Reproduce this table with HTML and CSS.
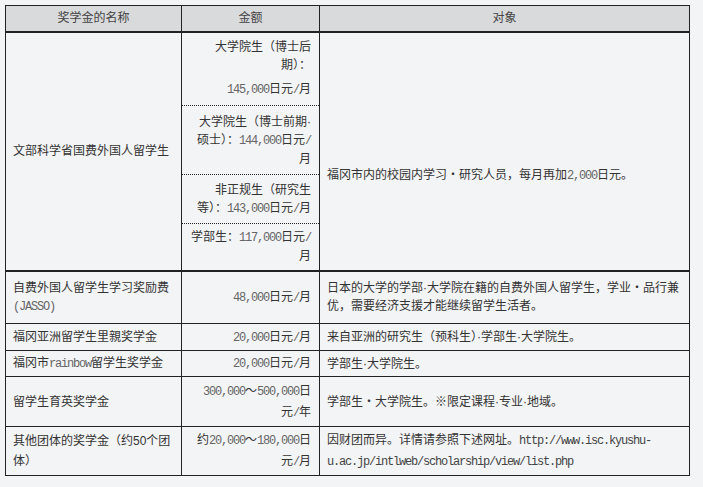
FILE: index.html
```html
<!DOCTYPE html>
<html lang="zh-CN">
<head>
<meta charset="utf-8">
<title>奖学金</title>
<link rel="stylesheet" href="styles.css">
</head>
<body>
<table class="sch">
  <colgroup><col class="c1"><col class="c2"><col class="c3"></colgroup>
  <thead>
    <tr class="hd"><th>奖学金的名称</th><th>金额</th><th>对象</th></tr>
  </thead>
  <tbody>
    <tr class="s1">
      <td rowspan="4" class="name big">文部科学省国费外国人留学生</td>
      <td class="amt dot-b">大学院生（博士后<br>期）：<div class="gap"><span class="num">145,000</span>日元<span class="num">/</span>月</div></td>
      <td rowspan="4" class="obj big top">福冈市内的校园内学习・研究人员，每月再加<span class="num">2,000</span>日元。</td>
    </tr>
    <tr class="s2">
      <td class="amt dot-t dot-b">大学院生（博士前期·<br>硕士）：<span class="num">144,000</span>日元<span class="num">/</span><br>月</td>
    </tr>
    <tr class="s3">
      <td class="amt dot-t dot-b">非正规生（研究生<br>等）：<span class="num">143,000</span>日元<span class="num">/</span>月</td>
    </tr>
    <tr class="s4">
      <td class="amt dot-t big">学部生：<span class="num">117,000</span>日元<span class="num">/</span><br>月</td>
    </tr>
    <tr class="r2">
      <td class="name">自费外国人留学生学习奖励费<br><span class="num">(JASSO)</span></td>
      <td class="amt"><span class="num">48,000</span>日元<span class="num">/</span>月</td>
      <td class="obj nw">日本的大学的学部·大学院在籍的自费外国人留学生，学业・品行兼<br>优，需要经济支援才能继续留学生活者。</td>
    </tr>
    <tr class="r3">
      <td class="name">福冈亚洲留学生里親奖学金</td>
      <td class="amt"><span class="num">20,000</span>日元<span class="num">/</span>月</td>
      <td class="obj">来自亚洲的研究生（预科生）·学部生·大学院生。</td>
    </tr>
    <tr class="r4">
      <td class="name">福冈市<span class="num">rainbow</span>留学生奖学金</td>
      <td class="amt"><span class="num">20,000</span>日元<span class="num">/</span>月</td>
      <td class="obj">学部生·大学院生。</td>
    </tr>
    <tr class="r5">
      <td class="name">留学生育英奖学金</td>
      <td class="amt"><span class="num">300,000</span>～<span class="num">500,000</span>日<br>元<span class="num">/</span>年</td>
      <td class="obj">学部生・大学院生。※限定课程·专业·地域。</td>
    </tr>
    <tr class="r6">
      <td class="name">其他团体的奖学金（约50个团<br>体）</td>
      <td class="amt">约<span class="num">20,000</span>～<span class="num">180,000</span>日<br>元<span class="num">/</span>月</td>
      <td class="obj nw">因财团而异。详情请参照下述网址。<span class="url">http://www.isc.kyushu-</span><br><span class="url">u.ac.jp/intlweb/scholarship/view/list.php</span></td>
    </tr>
  </tbody>
</table>
</body>
</html>
```

FILE: styles.css
```css
html, body {
  margin: 0;
  padding: 0;
  background: #f3f4f6;
}

body {
  font-family: "Liberation Sans", "Noto Sans CJK SC", sans-serif;
  font-size: 12px;
  color: #333;
}

.sch {
  border-collapse: collapse;
  table-layout: fixed;
  width: 684px;
  margin: 5px 0 0 5px;
}

col.c1 { width: 176px; }
col.c2 { width: 138px; }
col.c3 { width: 370px; }

.sch th,
.sch td {
  border: 1px solid #222;
  padding: 0 7px;
  line-height: 18px;
  vertical-align: middle;
  text-align: left;
}

.sch th {
  background: #d9dadb;
  font-weight: normal;
  text-align: center;
  color: #444;
  border-bottom: 2px solid #222;
}

.hd { height: 26px; }
.s1 { height: 74px; }
.s2 { height: 69px; }
.s3 { height: 49px; }
.s4 { height: 47px; }
.r2 { height: 53px; }
.r3 { height: 27px; }
.r4 { height: 26px; }
.r5 { height: 50px; }
.r6 { height: 49px; }

.r5 td, .r6 td { line-height: 20px; }

.sch td.big { border-bottom: 2px solid #222; }

.sch td.amt {
  text-align: right;
  padding: 0 8px 0 8px;
}

.sch td.dot-b { border-bottom: 1px dotted #222; }
.sch td.dot-t { border-top: 1px dotted #222; }

.sch td.top {
  vertical-align: top;
  padding-top: 133px;
}

.sch td.nw { white-space: nowrap; }

.gap { margin-top: 6px; }

.num {
  font-family: "Liberation Mono", monospace;
  font-size: 12px;
  letter-spacing: -1.2px;
  color: #666;
}

.url {
  font-family: "Liberation Mono", monospace;
  font-size: 12px;
  letter-spacing: -1.2px;
  color: #444;
}
```
